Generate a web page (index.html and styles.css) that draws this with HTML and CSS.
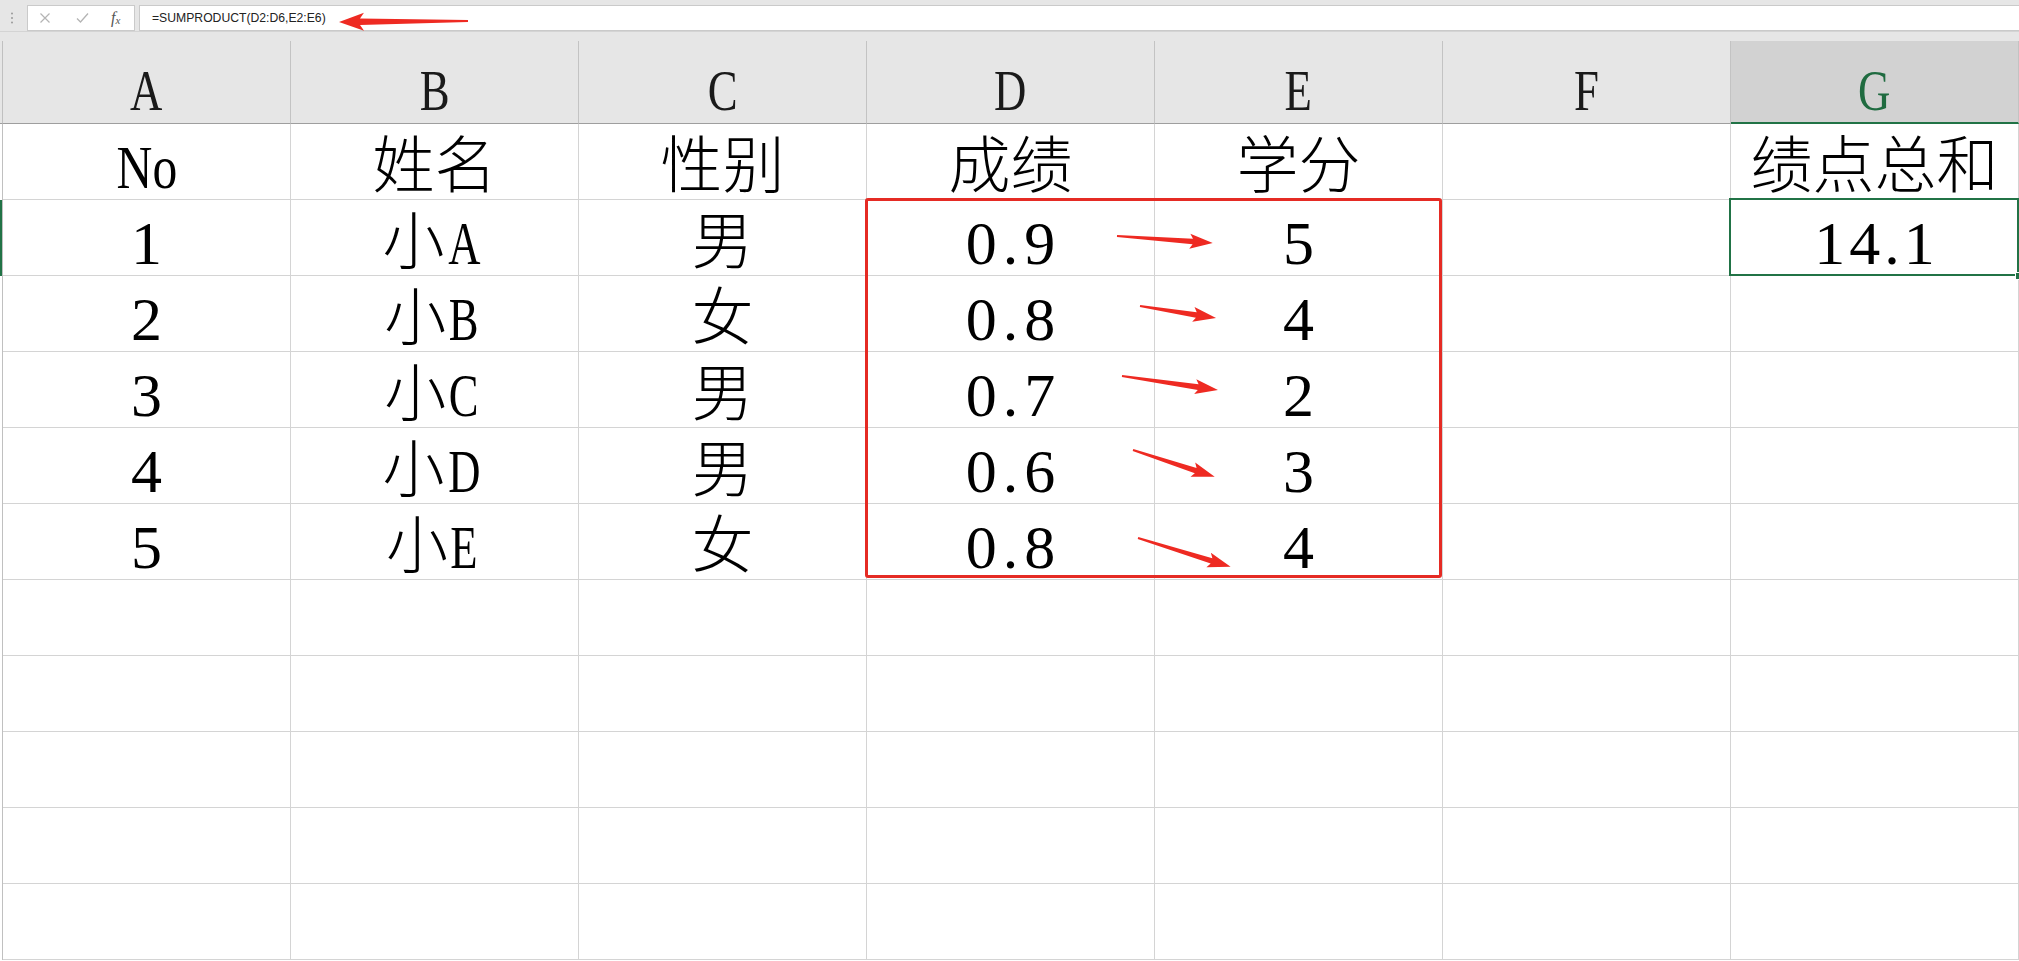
FILE: index.html
```html
<!DOCTYPE html>
<html lang="zh-CN">
<head>
<meta charset="utf-8">
<title>SUMPRODUCT</title>
<link rel="stylesheet" href="styles.css">
</head>
<body>
<div class="app">
  <div class="fbar">
    <div class="grip">
      <svg width="4" height="12" viewBox="0 0 4 12"><circle cx="2" cy="1.5" r="1" fill="#9a9a9a"/><circle cx="2" cy="6" r="1" fill="#9a9a9a"/><circle cx="2" cy="10.5" r="1" fill="#9a9a9a"/></svg>
    </div>
    <div class="fbtns">
      <svg class="ic ic-x" width="12" height="12" viewBox="0 0 12 12"><path d="M1.5 1.5 L10.5 10.5 M10.5 1.5 L1.5 10.5" stroke="#b4b4b4" stroke-width="1.2" fill="none"/></svg>
      <svg class="ic ic-ok" width="13" height="12" viewBox="0 0 13 12"><path d="M1 6.5 L4.5 10 L12 1.5" stroke="#b4b4b4" stroke-width="1.3" fill="none"/></svg>
      <span class="fx"><i>f</i><sub>x</sub></span>
    </div>
    <div class="finput">=SUMPRODUCT(D2:D6,E2:E6)</div>
  </div>
  <div class="strip"></div>

  <div class="colhead">
    <div class="stub"></div>
    <div class="ch"><span class="hl">A</span></div>
    <div class="ch"><span class="hl">B</span></div>
    <div class="ch"><span class="hl">C</span></div>
    <div class="ch"><span class="hl">D</span></div>
    <div class="ch"><span class="hl">E</span></div>
    <div class="ch"><span class="hl">F</span></div>
    <div class="ch ch-sel"><span class="hl">G</span></div>
  </div>

  <div class="grid">
    <div class="row">
      <div class="stub"></div>
      <div class="c"><span class="hl">No</span></div>
      <div class="c">姓名</div>
      <div class="c">性别</div>
      <div class="c">成绩</div>
      <div class="c">学分</div>
      <div class="c"></div>
      <div class="c">绩点总和</div>
    </div>
    <div class="row">
      <div class="stub stub-sel"></div>
      <div class="c">1</div>
      <div class="c">小<span class="hl hl-l">A</span></div>
      <div class="c">男</div>
      <div class="c num">0.9</div>
      <div class="c">5</div>
      <div class="c"></div>
      <div class="c num2 sel">14.1</div>
    </div>
    <div class="row">
      <div class="stub"></div>
      <div class="c">2</div>
      <div class="c">小<span class="hl hl-l">B</span></div>
      <div class="c">女</div>
      <div class="c num">0.8</div>
      <div class="c">4</div>
      <div class="c"></div>
      <div class="c"></div>
    </div>
    <div class="row">
      <div class="stub"></div>
      <div class="c">3</div>
      <div class="c">小<span class="hl hl-l">C</span></div>
      <div class="c">男</div>
      <div class="c num">0.7</div>
      <div class="c">2</div>
      <div class="c"></div>
      <div class="c"></div>
    </div>
    <div class="row">
      <div class="stub"></div>
      <div class="c">4</div>
      <div class="c">小<span class="hl hl-l">D</span></div>
      <div class="c">男</div>
      <div class="c num">0.6</div>
      <div class="c">3</div>
      <div class="c"></div>
      <div class="c"></div>
    </div>
    <div class="row">
      <div class="stub"></div>
      <div class="c">5</div>
      <div class="c">小<span class="hl hl-l">E</span></div>
      <div class="c">女</div>
      <div class="c num">0.8</div>
      <div class="c">4</div>
      <div class="c"></div>
      <div class="c"></div>
    </div>
    <div class="row"><div class="stub"></div><div class="c"></div><div class="c"></div><div class="c"></div><div class="c"></div><div class="c"></div><div class="c"></div><div class="c"></div></div>
    <div class="row"><div class="stub"></div><div class="c"></div><div class="c"></div><div class="c"></div><div class="c"></div><div class="c"></div><div class="c"></div><div class="c"></div></div>
    <div class="row"><div class="stub"></div><div class="c"></div><div class="c"></div><div class="c"></div><div class="c"></div><div class="c"></div><div class="c"></div><div class="c"></div></div>
    <div class="row"><div class="stub"></div><div class="c"></div><div class="c"></div><div class="c"></div><div class="c"></div><div class="c"></div><div class="c"></div><div class="c"></div></div>
    <div class="row"><div class="stub"></div><div class="c"></div><div class="c"></div><div class="c"></div><div class="c"></div><div class="c"></div><div class="c"></div><div class="c"></div></div>
  </div>

  <div class="redbox"></div>

  <svg class="marks" width="2019" height="961" viewBox="0 0 2019 961">
    <g fill="#ee2a22">
      <polygon transform="translate(468,21) rotate(179.6)" points="0,-1 108,-3.2 104,-9 129,0 104,9 108,3.2 0,1"/>
      <polygon transform="translate(1117,236) rotate(4.2)" points="0,-1 76,-2.8 73,-7.5 96,0 73,7.5 76,2.8 0,1"/>
      <polygon transform="translate(1140,306) rotate(9)" points="0,-1 57,-2.8 54,-7.5 77,0 54,7.5 57,2.8 0,1"/>
      <polygon transform="translate(1122,376) rotate(8.3)" points="0,-1 77,-2.8 74,-7.5 97,0 74,7.5 77,2.8 0,1"/>
      <polygon transform="translate(1133,450) rotate(18.2)" points="0,-1 66,-2.8 63,-7.5 86,0 63,7.5 66,2.8 0,1"/>
      <polygon transform="translate(1138,538) rotate(17.3)" points="0,-1 77,-2.8 74,-7.5 97,0 74,7.5 77,2.8 0,1"/>
    </g>
  </svg>
</div>
</body>
</html>
```

FILE: styles.css
```css
html, body {
  margin: 0;
  padding: 0;
  background: #ffffff;
}

.app {
  position: relative;
  width: 2019px;
  height: 961px;
  overflow: hidden;
  background: #ffffff;
}

/* formula bar */
.fbar {
  height: 31px;
  box-sizing: border-box;
  padding-top: 5px;
  display: flex;
  align-items: stretch;
  background: #e6e6e6;
}

.grip {
  width: 27px;
  display: flex;
  align-items: center;
  justify-content: center;
  padding-right: 4px;
  box-sizing: border-box;
}

.fbtns {
  width: 108px;
  box-sizing: border-box;
  background: #ffffff;
  border: 1px solid #cacaca;
  display: flex;
  align-items: center;
  margin-right: 4px;
}

.ic-x { margin-left: 11px; }
.ic-ok { margin-left: 25px; }

.fx {
  margin-left: 22px;
  font-family: "Liberation Serif", serif;
  font-size: 16px;
  color: #555555;
  line-height: 1;
}

.fx i { font-style: italic; }
.fx sub { font-size: 11px; font-style: italic; vertical-align: -1px; }

.finput {
  flex: 1;
  box-sizing: border-box;
  background: #ffffff;
  border: 1px solid #cacaca;
  border-right: none;
  padding-left: 12px;
  font-family: "Liberation Sans", Arial, sans-serif;
  font-size: 12.2px;
  line-height: 24px;
  color: #222222;
}

.strip {
  height: 10px;
  background: #e6e6e6;
  border-top: 1px solid #d4d4d4;
  box-sizing: border-box;
}

/* column header */
.colhead {
  display: grid;
  grid-template-columns: 3px repeat(7, 288px);
  height: 83px;
  background: #e6e6e6;
}

.colhead .stub {
  border-bottom: 1px solid #9e9e9e;
  border-right: 1px solid #c0c0c0;
  box-sizing: border-box;
}

.ch {
  box-sizing: border-box;
  border-right: 1px solid #c3c3c3;
  border-bottom: 1px solid #9e9e9e;
  text-align: center;
  padding-top: 22px;
  font-family: "Liberation Serif", "Noto Sans CJK SC", serif;
  font-size: 56px;
  line-height: 56px;
  color: #1a1a1a;
}

.ch-sel {
  background: #d2d2d2;
  border-bottom: 2px solid #217346;
  color: #1f6b40;
}

.hl {
  display: inline-block;
  transform: scaleX(0.8);
}

.hl-l {
  transform: scaleX(0.72);
  margin-left: -3px;
}

/* grid */
.grid {
  display: flex;
  flex-direction: column;
}

.row {
  display: grid;
  grid-template-columns: 3px repeat(7, 288px);
  height: 76px;
}

.row .stub {
  box-sizing: border-box;
  border-right: 1px solid #c0c0c0;
  background: #ffffff;
}

.row .stub-sel {
  background: #217346;
}

.c {
  box-sizing: border-box;
  border-right: 1px solid #d4d4d4;
  border-bottom: 1px solid #d4d4d4;
  text-align: center;
  padding-top: 12px;
  font-family: "Liberation Serif", "Noto Sans CJK SC", serif;
  font-weight: 300;
  font-size: 62px;
  line-height: 62px;
  color: #000000;
  white-space: nowrap;
}

.num {
  letter-spacing: 6px;
  text-indent: 6px;
}

.num2 {
  letter-spacing: 4px;
  text-indent: 4px;
}

.sel {
  position: relative;
  z-index: 2;
}

.sel::before {
  content: "";
  position: absolute;
  left: -2px;
  top: -2px;
  right: -1px;
  bottom: -1px;
  border: 2px solid #217346;
}

.sel::after {
  content: "";
  position: absolute;
  right: -5px;
  bottom: -5px;
  width: 6px;
  height: 6px;
  background: #217346;
  border: 1px solid #ffffff;
}

/* annotations */
.redbox {
  position: absolute;
  left: 865px;
  top: 198px;
  width: 577px;
  height: 380px;
  box-sizing: border-box;
  border: 3px solid #e52b24;
  border-radius: 3px;
  pointer-events: none;
}

.marks {
  position: absolute;
  left: 0;
  top: 0;
  pointer-events: none;
}
```
